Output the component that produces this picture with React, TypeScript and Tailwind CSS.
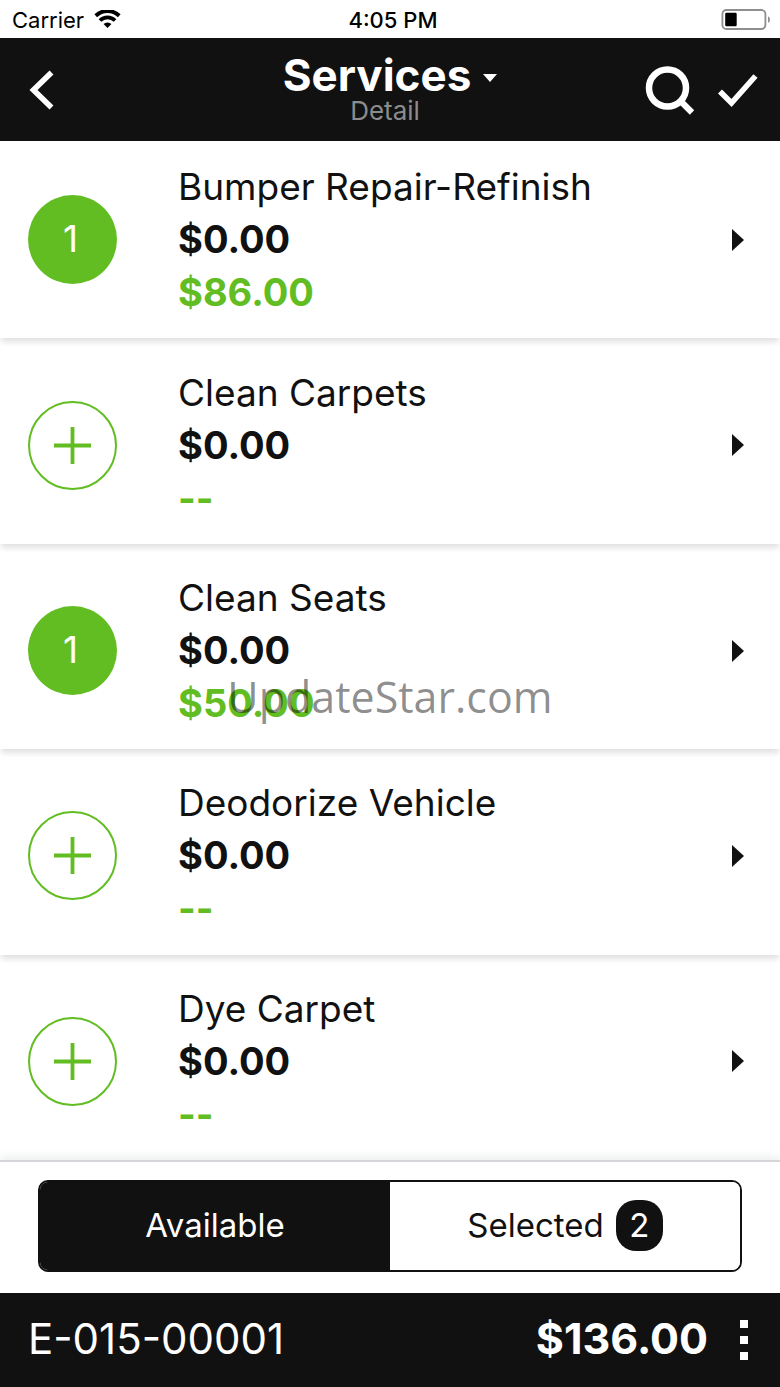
import React, { useState } from "react";

type Service = { name: string; price: string; total: string; count: number };

const services: Service[] = [
  { name: "Bumper Repair-Refinish", price: "$0.00", total: "$86.00", count: 1 },
  { name: "Clean Carpets", price: "$0.00", total: "--", count: 0 },
  { name: "Clean Seats", price: "$0.00", total: "$50.00", count: 1 },
  { name: "Deodorize Vehicle", price: "$0.00", total: "--", count: 0 },
  { name: "Dye Carpet", price: "$0.00", total: "--", count: 0 },
];

function StatusBar() {
  return (
    <div className="grid h-[38px] shrink-0 grid-cols-3 items-center bg-white pt-0.5 pl-3 pr-2.5 text-[22px] leading-6 text-black">
      <div className="flex items-center gap-2.5">
        <span>Carrier</span>
        <svg className="h-5 w-[27px]" viewBox="0 0 28 20" aria-hidden="true">
          <path d="M1.8 5.6A17.5 17.5 0 0 1 26.2 5.6" fill="none" stroke="#000" strokeWidth="4" />
          <path d="M6.2 10.6A11 11 0 0 1 21.8 10.6" fill="none" stroke="#000" strokeWidth="3.8" />
          <path d="M9.9 14.2A5.8 5.8 0 0 1 18.1 14.2L14 18.3Z" fill="#000" />
        </svg>
      </div>
      <div className="pl-1 text-center font-medium">4:05 PM</div>
      <svg className="h-[22px] w-[50px] justify-self-end" viewBox="0 0 50 22" aria-hidden="true">
        <rect x="2.4" y="1" width="43" height="19" rx="4" fill="none" stroke="#8e8e8e" strokeWidth="1.8" />
        <rect x="5.2" y="3.7" width="11.5" height="13.5" rx="1.2" fill="#000" />
        <path d="M48 7.2Q50 8 50 10.5T48 13.8Z" fill="#8e8e8e" />
      </svg>
    </div>
  );
}

function Header() {
  return (
    <header className="grid h-[103px] shrink-0 grid-cols-[1fr_auto_1fr] items-center bg-[#111] pl-6 pr-5 text-white">
      <button aria-label="Back" className="w-9">
        <svg className="h-11 w-9" viewBox="0 0 36 44" aria-hidden="true">
          <path d="M27.5 4.5L9.5 22L27.5 39.5" fill="none" stroke="#fff" strokeWidth="5.6" />
        </svg>
      </button>
      <button className="flex flex-col items-center pr-1 pb-1.5">
        <span className="flex items-center gap-3">
          <span className="text-[44px] leading-[48px] font-bold">Services</span>
          <svg className="mt-1.5 h-2 w-3.5" viewBox="0 0 14 8" aria-hidden="true">
            <path d="M0 0H14L7 8Z" fill="#fff" />
          </svg>
        </span>
        <span className="pr-2.5 text-[26px] leading-6 text-[#8c8c8c]">Detail</span>
      </button>
      <div className="flex items-center justify-end gap-5">
        <button aria-label="Search">
          <svg className="h-[52px] w-[52px]" viewBox="0 0 52 52" aria-hidden="true">
            <circle cx="23.5" cy="24" r="18.5" fill="none" stroke="#fff" strokeWidth="6.5" />
            <path d="M35.5 36L48 48.5" stroke="#fff" strokeWidth="6.2" />
          </svg>
        </button>
        <button aria-label="Done">
          <svg className="h-10 w-11" viewBox="0 0 44 40" aria-hidden="true">
            <path d="M4 21.5L15.5 33L39.5 6" fill="none" stroke="#fff" strokeWidth="5.6" />
          </svg>
        </button>
      </div>
    </header>
  );
}

function ServiceRow({ service }: { service: Service }) {
  return (
    <li className="flex flex-1 items-center bg-white pl-7 pr-9 shadow-[0_5px_6px_-1px_rgba(0,0,0,0.12)]">
      {service.count > 0 ? (
        <button
          aria-label={`${service.name} quantity`}
          className="flex size-[89px] shrink-0 items-center justify-center rounded-full bg-[#62bd22] pr-1 pb-0.5 text-[37px] text-white"
        >
          {service.count}
        </button>
      ) : (
        <button
          aria-label={`Add ${service.name}`}
          className="flex size-[89px] shrink-0 items-center justify-center rounded-full border-2 border-[#62bd22]"
        >
          <svg className="size-[37px]" viewBox="0 0 37 37" aria-hidden="true">
            <path d="M0 18.5H37M18.5 0V37" stroke="#62bd22" strokeWidth="3.8" />
          </svg>
        </button>
      )}
      <div className="ml-[61px] flex-1 text-[38px] leading-[53px] text-[#111]">
        <h2 className="text-[37px] leading-[53px]">{service.name}</h2>
        <p className="font-bold">{service.price}</p>
        <p className="font-bold text-[#62bd22]">{service.total}</p>
      </div>
      <button aria-label={`Open ${service.name}`}>
        <svg className="h-[22px] w-3" viewBox="0 0 12 22" aria-hidden="true">
          <path d="M0 0L12 11L0 22Z" fill="#111" />
        </svg>
      </button>
    </li>
  );
}

export default function App() {
  const [tab, setTab] = useState<"available" | "selected">("available");
  const active = "bg-[#111] text-white";
  const idle = "bg-white text-[#111]";
  return (
    <div className="relative flex min-h-screen flex-col bg-white font-['Inter','Liberation_Sans',sans-serif]">
      <StatusBar />
      <Header />
      <main className="flex flex-1 flex-col">
        <ul className="flex flex-1 flex-col gap-2">
          {services.map((s) => (
            <ServiceRow key={s.name} service={s} />
          ))}
        </ul>
      </main>
      <section className="relative flex h-[133px] shrink-0 items-center border-t-2 border-[#d4d6d9] bg-white px-[38px] pb-1 shadow-[0_-4px_8px_rgba(40,60,80,0.08)]">
        <div className="grid h-[92px] flex-1 grid-cols-2 overflow-hidden rounded-[10px] border-2 border-[#111] text-[33px]">
          <button className={tab === "available" ? active : idle} onClick={() => setTab("available")}>
            Available
          </button>
          <button
            className={`flex items-center justify-center gap-3 ${tab === "selected" ? active : idle}`}
            onClick={() => setTab("selected")}
          >
            Selected
            <span className="flex h-[51px] w-[47px] items-center justify-center rounded-[20px] bg-[#111] text-white">2</span>
          </button>
        </div>
      </section>
      <footer className="flex h-[94px] shrink-0 items-center bg-[#111] pl-7 pr-8 text-[42px] text-white">
        <span className="flex-1 pb-1">E-015-00001</span>
        <span className="pb-1 text-[43px] font-bold">$136.00</span>
        <button aria-label="More" className="ml-8 flex flex-col gap-2">
          <span className="size-2 bg-white" />
          <span className="size-2 bg-white" />
          <span className="size-2 bg-white" />
        </button>
      </footer>
      <div className="pointer-events-none absolute inset-0 flex items-center justify-center pt-2 font-['Open_Sans','Noto_Sans',sans-serif] text-[43px] text-black/45">
        UpdateStar.com
      </div>
    </div>
  );
}
